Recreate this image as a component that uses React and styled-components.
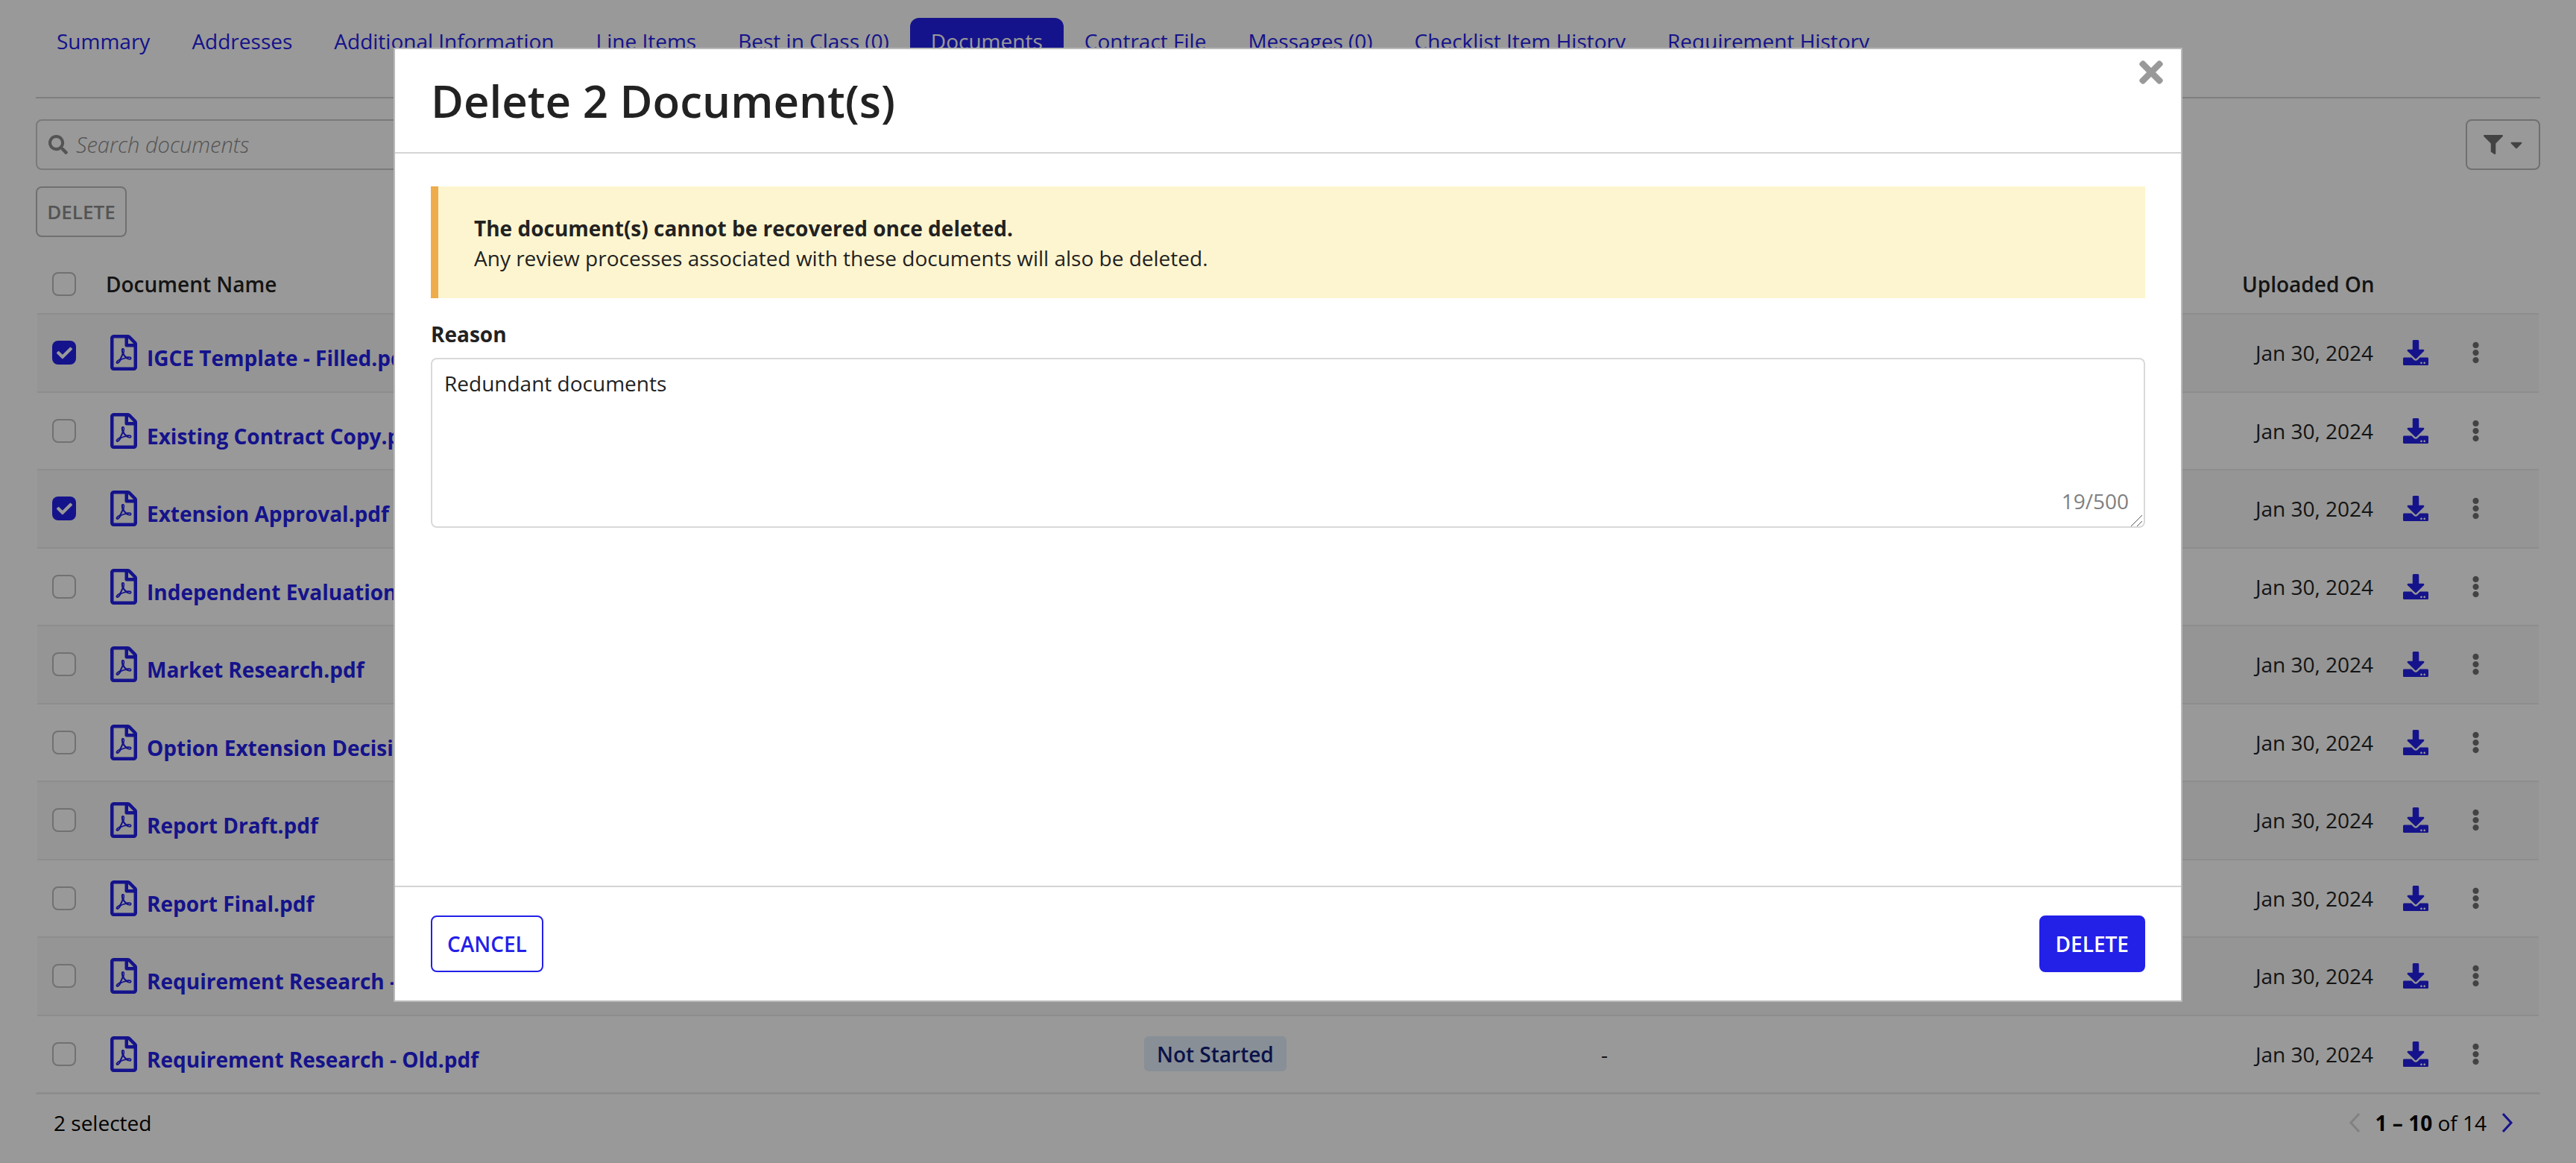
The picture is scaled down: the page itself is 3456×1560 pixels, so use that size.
import React from "react";
import styled, { createGlobalStyle } from "styled-components";
import {
	FaCaretDown,
	FaCheck,
	FaDownload,
	FaEllipsisV,
	FaFilter,
	FaRegFilePdf,
	FaSearch,
	FaTimes,
} from "react-icons/fa";

const PRIMARY = "#2320e8";

const tabs = [
	"Summary",
	"Addresses",
	"Additional Information",
	"Line Items",
	"Best in Class (0)",
	"Documents",
	"Contract File",
	"Messages (0)",
	"Checklist Item History",
	"Requirement History",
];

const documents = [
	{ name: "IGCE Template - Filled.pdf", checked: true },
	{ name: "Existing Contract Copy.pdf" },
	{ name: "Extension Approval.pdf", checked: true },
	{ name: "Independent Evaluation.pdf" },
	{ name: "Market Research.pdf" },
	{ name: "Option Extension Decision.pdf" },
	{ name: "Report Draft.pdf" },
	{ name: "Report Final.pdf" },
	{ name: "Requirement Research - New.pdf" },
	{ name: "Requirement Research - Old.pdf", status: "Not Started", reviewer: "-" },
];

export default function App() {
	return (
		<>
			<GlobalStyle />
			<Page>
				<Tabs>
					{tabs.map((tab) => (
						<Tab key={tab} $active={tab === "Documents"}>
							{tab}
						</Tab>
					))}
				</Tabs>
				<Toolbar>
					<SearchBox>
						<SearchIcon />
						<SearchText>Search documents</SearchText>
					</SearchBox>
					<FilterButton>
						<FilterIcon />
						<CaretIcon />
					</FilterButton>
				</Toolbar>
				<BulkDelete>DELETE</BulkDelete>
				<HeaderRow>
					<CheckCell>
						<Checkbox />
					</CheckCell>
					<HeaderName>Document Name</HeaderName>
					<div />
					<div />
					<DateCell>Uploaded On</DateCell>
				</HeaderRow>
				{documents.map((doc, i) => (
					<Row key={doc.name} $alt={i % 2 === 0}>
						<CheckCell>
							<Checkbox $checked={doc.checked}>{doc.checked && <FaCheck size={21} />}</Checkbox>
						</CheckCell>
						<DocCell>
							<PdfIcon />
							<DocName>{doc.name}</DocName>
						</DocCell>
						<div>{doc.status && <Badge>{doc.status}</Badge>}</div>
						<div>{doc.reviewer}</div>
						<DateCell>Jan 30, 2024</DateCell>
						<DownloadCell>
							<FaDownload size={34} />
						</DownloadCell>
						<MenuCell>
							<MenuIcon />
						</MenuCell>
					</Row>
				))}
				<Footer>
					<span>2 selected</span>
					<Pager>
						<Chevron viewBox="0 0 16 26" $disabled>
							<path d="M14 1 L3 13 L14 25" />
						</Chevron>
						<span>
							<b>1 – 10</b> of 14
						</span>
						<Chevron viewBox="0 0 16 26">
							<path d="M2 1 L13 13 L2 25" />
						</Chevron>
					</Pager>
				</Footer>
			</Page>
			<Overlay>
				<Modal>
					<CloseIcon />
					<ModalHeader>
						<Title>Delete 2 Document(s)</Title>
					</ModalHeader>
					<ModalBody>
						<Alert>
							<b>The document(s) cannot be recovered once deleted.</b>
							<div>Any review processes associated with these documents will also be deleted.</div>
						</Alert>
						<Label>Reason</Label>
						<TextareaWrap>
							<Textarea defaultValue="Redundant documents" />
							<Counter>19/500</Counter>
							<ResizeGrip viewBox="0 0 16 16">
								<path d="M0 15 L15 0 M8 15 L15 8" />
							</ResizeGrip>
						</TextareaWrap>
					</ModalBody>
					<ModalFooter>
						<Button>CANCEL</Button>
						<Button $solid>DELETE</Button>
					</ModalFooter>
				</Modal>
			</Overlay>
		</>
	);
}

const GlobalStyle = createGlobalStyle`
	* {
		box-sizing: border-box;
	}
	html, body {
		margin: 0;
		height: 100%;
		overflow: hidden;
		background: #fff;
	}
	body {
		font-family: "Open Sans", sans-serif;
		font-size: 28px;
		line-height: 40px;
		color: #222;
	}
`;
const Page = styled.div`
	height: 1560px;
	padding: 24px 48px 0;
`;
const Tabs = styled.div`
	display: flex;
	height: 108px;
	margin-bottom: 28px;
	border-bottom: 2px solid #d4d4d4;
`;
const Tab = styled.div`
	height: 62px;
	padding: 0 28px;
	display: flex;
	align-items: center;
	white-space: nowrap;
	border-radius: 12px;
	color: ${(p) => (p.$active ? "#fff" : PRIMARY)};
	background: ${(p) => (p.$active ? PRIMARY : "transparent")};
`;
const Toolbar = styled.div`
	display: flex;
	justify-content: space-between;
`;
const SearchBox = styled.div`
	width: 1400px;
	height: 68px;
	display: flex;
	align-items: center;
	gap: 11px;
	padding-left: 15px;
	border: 2px solid #ccc;
	border-radius: 8px;
`;
const SearchIcon = styled(FaSearch)`
	width: 26px;
	height: 26px;
	color: #8c8c8c;
`;
const SearchText = styled.span`
	font-size: 29px;
	font-style: italic;
	font-weight: 300;
	color: #8c8c8c;
`;
const FilterButton = styled.div`
	width: 100px;
	height: 68px;
	display: flex;
	align-items: center;
	justify-content: center;
	gap: 10px;
	color: #717171;
	border: 2px solid #bbb;
	border-radius: 8px;
`;
const FilterIcon = styled(FaFilter)`
	width: 26px;
	height: 26px;
`;
const CaretIcon = styled(FaCaretDown)`
	width: 16px;
	height: 26px;
`;
const BulkDelete = styled.div`
	width: 122px;
	height: 68px;
	margin-top: 22px;
	display: flex;
	align-items: center;
	justify-content: center;
	font-size: 26px;
	font-weight: 600;
	color: #8c8c8c;
	border: 2px solid #bbb;
	border-radius: 8px;
`;
const Columns = styled.div`
	display: grid;
	grid-template-columns: 98px 1387px 613px 860px 176px 132px 1fr;
	align-items: center;
	margin: 0 2px;
	border-bottom: 2px solid #ececec;
`;
const HeaderRow = styled(Columns)`
	height: 80px;
	margin-top: 24px;
	font-weight: 600;
`;
const HeaderName = styled.div`
	margin-left: -6px;
`;
const Row = styled(Columns)`
	height: 104.5px;
	background: ${(p) => (p.$alt ? "#f8f8f8" : "#fff")};
`;
const CheckCell = styled.div`
	padding-left: 20px;
	display: flex;
`;
const Checkbox = styled.span`
	width: 32px;
	height: 32px;
	display: flex;
	align-items: center;
	justify-content: center;
	border-radius: 8px;
	border: ${(p) => (p.$checked ? "none" : "2px solid #bdbdbd")};
	background: ${(p) => (p.$checked ? PRIMARY : "#fff")};
	color: #fff;
`;
const DocCell = styled.div`
	display: flex;
	align-items: center;
	gap: 13px;
	color: ${PRIMARY};
`;
const PdfIcon = styled(FaRegFilePdf)`
	flex: none;
	width: 36px;
	height: 48px;
`;
const DocName = styled.span`
	margin-top: 14px;
	font-weight: 700;
	white-space: nowrap;
`;
const Badge = styled.span`
	display: inline-flex;
	align-items: center;
	height: 47px;
	padding: 0 17px;
	border-radius: 6px;
	font-weight: 600;
	color: #121e7a;
	background: #e3eefb;
`;
const DateCell = styled.div`
	text-align: right;
	white-space: nowrap;
`;
const DownloadCell = styled.div`
	padding-left: 40px;
	display: flex;
	color: ${PRIMARY};
`;
const MenuCell = styled.div`
	display: flex;
	color: #717171;
`;
const MenuIcon = styled(FaEllipsisV)`
	width: 11px;
	height: 30px;
`;
const Footer = styled.div`
	height: 78px;
	margin-top: -1px;
	padding: 0 36px 0 24px;
	display: flex;
	align-items: center;
	justify-content: space-between;
	border-top: 2px solid #ececec;
	color: #000;
`;
const Pager = styled.div`
	display: flex;
	align-items: center;
	gap: 20px;
`;
const Chevron = styled.svg`
	width: 16px;
	height: 26px;
	fill: none;
	stroke-width: 3;
	stroke: ${(p) => (p.$disabled ? "#d8d8d8" : PRIMARY)};
`;
const Overlay = styled.div`
	position: fixed;
	inset: 0;
	display: flex;
	justify-content: center;
	align-items: flex-start;
	padding-top: 64px;
	background: rgba(0, 0, 0, 0.4);
`;
const Modal = styled.div`
	position: relative;
	width: 2400px;
	height: 1280px;
	display: flex;
	flex-direction: column;
	background: #fff;
	border: 2px solid #b9b9b9;
`;
const CloseIcon = styled(FaTimes)`
	position: absolute;
	top: 8px;
	right: 24px;
	width: 32px;
	height: 46px;
	color: #999;
`;
const ModalHeader = styled.div`
	height: 140px;
	padding: 0 48px;
	display: flex;
	align-items: center;
	border-bottom: 2px solid #d4d4d4;
`;
const Title = styled.h1`
	margin: 0;
	font-size: 60px;
	line-height: 80px;
	font-weight: 600;
	color: #222;
`;
const ModalBody = styled.div`
	flex: 1;
	padding: 44px 48px 0;
`;
const Alert = styled.div`
	height: 150px;
	padding: 36px 48px 0;
	background: #fdf5cf;
	border-left: 10px solid #eeac4c;
`;
const Label = styled.div`
	margin: 28px 0 12px;
	font-weight: 700;
`;
const TextareaWrap = styled.div`
	position: relative;
	display: flex;
`;
const Textarea = styled.textarea`
	width: 100%;
	height: 228px;
	padding: 12px 16px;
	font: inherit;
	color: #222;
	border: 2px solid #d9d9d9;
	border-radius: 8px;
	outline: none;
	resize: none;
`;
const Counter = styled.span`
	position: absolute;
	right: 22px;
	bottom: 16px;
	color: #808080;
`;
const ResizeGrip = styled.svg`
	position: absolute;
	right: 3px;
	bottom: 1px;
	width: 16px;
	height: 16px;
	fill: none;
	stroke: #555;
	stroke-width: 1;
`;
const ModalFooter = styled.div`
	height: 154px;
	padding: 0 48px;
	display: flex;
	align-items: center;
	justify-content: space-between;
	border-top: 2px solid #d4d4d4;
`;
const Button = styled.div`
	height: 76px;
	padding: 0 20px;
	display: flex;
	align-items: center;
	font-weight: 600;
	border-radius: 8px;
	border: 2px solid ${PRIMARY};
	color: ${(p) => (p.$solid ? "#fff" : PRIMARY)};
	background: ${(p) => (p.$solid ? PRIMARY : "#fff")};
`;
